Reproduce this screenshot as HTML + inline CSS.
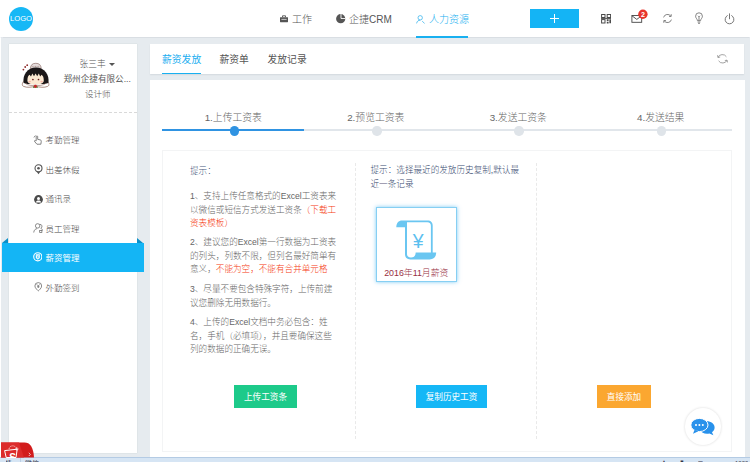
<!DOCTYPE html>
<html lang="zh-CN">
<head>
<meta charset="utf-8">
<title>薪资发放</title>
<style>
*{box-sizing:border-box;margin:0;padding:0}
html,body{width:750px;height:462px;overflow:hidden}
body{position:relative;background:#e6ebef;font-family:"Liberation Sans","Noto Sans CJK SC",sans-serif;color:#666;font-size:8.6px;line-height:1;font-weight:300}
.abs{position:absolute}
.t{position:absolute;white-space:nowrap;line-height:12px;height:12px}
/* header */
#hd{position:absolute;left:0;top:0;width:750px;height:36.8px;background:#fff;box-shadow:0 .6px .8px #d9dee3}
#logo{position:absolute;left:9px;top:7px;width:24px;height:24px;border-radius:50%;background:#16b8f6;color:#fff;font-size:7.6px;line-height:24.4px;text-align:center;letter-spacing:0;font-weight:400}
.nav{position:absolute;top:14.2px;font-size:10px;line-height:12px;height:12px;color:#555;white-space:nowrap}
.nav.on{color:#19b0f0}
#navline{position:absolute;left:416px;top:36.4px;width:52px;height:1.5px;background:#19b0f0}
#plus{position:absolute;left:530px;top:9px;width:49px;height:18.5px;background:#14b4f5}
#plus:before{content:"";position:absolute;left:20px;top:9.2px;width:9.2px;height:.8px;background:#fff}
#plus:after{content:"";position:absolute;left:24.2px;top:5px;width:.8px;height:9.2px;background:#fff}
/* sidebar */
#side{position:absolute;left:8.7px;top:43.6px;width:128.5px;height:409px;background:#fff;box-shadow:0 0 1px rgba(120,135,150,.35)}
#sep{position:absolute;left:8.5px;top:112px;width:128.5px;height:0;border-top:1px dashed #d9d9d9}
.mi{position:absolute;margin-top:.4px;left:45.5px;font-size:8.5px;line-height:12px;height:12px;color:#484848;white-space:nowrap}
#act{position:absolute;left:2px;top:243px;width:141.5px;height:29.4px;background:#14b5f5}
.tri{position:absolute;width:0;height:0;border-style:solid}
/* main */
#tabs{position:absolute;left:150px;top:43.6px;width:594.4px;height:30.4px;background:#fff;box-shadow:0 .8px 1.2px #d3d9df}
.tab{position:absolute;top:53.7px;font-size:9.8px;line-height:12px;height:12px;color:#555;font-weight:400;white-space:nowrap}
#panel{position:absolute;left:150px;top:80px;width:594.5px;height:377px;background:#fff}
#box{position:absolute;left:162px;top:150px;width:570px;height:301.6px;border:1px solid #f3f4f5}
.st{position:absolute;top:111.8px;width:100px;margin-left:-50px;text-align:center;font-size:9.8px;line-height:12px;color:#666;white-space:nowrap}
.dot{position:absolute;width:9.4px;height:9.4px;border-radius:50%;background:#dfe4e9;top:126.2px;margin-left:-4.7px}
.p{position:absolute;left:190px;white-space:nowrap;font-size:8.6px;line-height:13.6px;color:#666}
.red{color:#f5380f}
.vd{position:absolute;top:163px;height:276px;width:0;border-left:1px dashed #e9e9e9}
.btn{position:absolute;top:385px;height:23px;line-height:24.8px;color:#fff;text-align:center;font-size:8.6px;white-space:nowrap;font-weight:400}
#task{position:absolute;left:0;top:456.6px;width:750px;height:6px;background:#d6e5f4;border-top:1px solid #b4cbe4}
</style>
</head>
<body>
<div class="abs" style="left:0;top:37px;width:.8px;height:420px;background:#fff"></div>
<div id="hd">
  <div id="logo">LOGO</div>
  <svg class="abs" style="left:280px;top:14.6px" width="8" height="8" viewBox="0 0 8 8"><rect x="0" y="2.2" width="8" height="5" rx=".4" fill="#555"/><path d="M2.5 2.2V.8h3V2.2" fill="none" stroke="#555" stroke-width=".9"/><rect x="1.4" y="3.9" width="5.2" height=".9" fill="#fff" opacity=".75"/></svg>
  <div class="nav" style="left:292px">工作</div>
  <svg class="abs" style="left:336.3px;top:14.4px" width="9.4" height="9.4" viewBox="0 0 9.4 9.4"><circle cx="4.7" cy="4.7" r="4.6" fill="#555"/><path d="M5 0v4.5H9.4" stroke="#fff" stroke-width=".9" fill="none"/></svg>
  <div class="nav" style="left:349px">企捷CRM</div>
  <svg class="abs" style="left:415.8px;top:14.6px" width="10" height="9" viewBox="0 0 10 9"><circle cx="4.2" cy="2.8" r="2.2" fill="none" stroke="#3eb6ee" stroke-width=".8"/><path d="M0.6 8.4C1 6 2.6 5.2 4.2 5.2" fill="none" stroke="#3eb6ee" stroke-width=".8"/><path d="M6.2 6.2l2.4 2.2" stroke="#3eb6ee" stroke-width=".8"/></svg>
  <div class="nav on" style="left:429px">人力资源</div>
  <div id="navline"></div>
  <div id="plus"></div>
  <!-- qr -->
  <svg class="abs" style="left:601.2px;top:14.2px" width="10.2" height="9.6" viewBox="0 0 10.2 9.6"><g fill="none" stroke="#4a4a4a" stroke-width="1"><rect x=".6" y=".5" width="3.4" height="3"/><rect x="6.2" y=".5" width="3.4" height="3"/><rect x=".6" y="5.600000" width="3.400000" height="3.400000"/></g><path d="M0 4.500000h10.200000" stroke="#4a4a4a" stroke-width=".9"/><path d="M5.800000 5.300000h1.800000v1.600000H5.800000zM8.400000 5.300000h1.600000v4H8.400000zM5.800000 7.800000h1.800000v1.600000H5.800000z" fill="#4a4a4a"/></svg>
  <!-- mail -->
  <svg class="abs" style="left:631px;top:9px" width="17" height="15" viewBox="0 0 17 15"><rect x=".9" y="6.5" width="9.8" height="6.8" fill="#fff" stroke="#444" stroke-width=".9"/><path d="M1 6.8l4.8 3.6 4.8-3.6" fill="none" stroke="#444" stroke-width=".9"/><circle cx="11.9" cy="5.2" r="4.7" fill="#e8352c"/><text x="11.9" y="7.8" font-size="7.2" font-weight="bold" fill="#fff" text-anchor="middle" font-family="Liberation Sans, sans-serif">2</text></svg>
  <!-- refresh -->
  <svg class="abs" style="left:662px;top:13px" width="11" height="11" viewBox="0 0 11 11"><g fill="none" stroke="#666" stroke-width=".8"><path d="M1.6 4.4A4 4 0 0 1 8.8 3.2"/><path d="M9.4 6.6A4 4 0 0 1 2.2 7.8"/><path d="M9.2 1.2v2.2H7M1.8 9.8V7.6H4"/></g></svg>
  <!-- bulb -->
  <svg class="abs" style="left:694px;top:12px" width="10" height="12" viewBox="0 0 10 12"><g fill="none" stroke="#666" stroke-width=".8"><path d="M3.4 8.6C3.4 7 1.6 6.2 1.6 4.2a3.4 3.4 0 0 1 6.8 0C8.4 6.2 6.6 7 6.6 8.6z"/><path d="M3.6 10h2.8M4 11.3h2M5 8.4V4.6M4 3.8l1 1 1-1"/></g></svg>
  <!-- power -->
  <svg class="abs" style="left:723.5px;top:12.5px" width="11" height="12" viewBox="0 0 11 12"><g fill="none" stroke="#666" stroke-width=".9" stroke-linecap="round"><path d="M3.3 2.6A4.4 4.4 0 1 0 7.7 2.6"/><path d="M5.5 .8v5"/></g></svg>
</div>

<!-- sidebar -->
<div id="side"></div>
<svg class="abs" style="left:15px;top:56px" width="40" height="40" viewBox="0 0 40 40">
  <path d="M15.4 12.4C15.6 9 17.400000 7.300000 20.800000 7.300000C24.200000 7.300000 26 9 26.200000 12.400000Z" fill="#e6dddd" stroke="#7d5d55" stroke-width=".6"/>
  <path d="M16.8 10.400000h8" stroke="#9a7f78" stroke-width=".7" stroke-dasharray="1 .6"/>
  <path d="M9.2 24.5C7 27 6.6 29.6 8.6 30.4C12 31.8 16 31.4 20.4 30.2C24.8 31.4 29.4 31.8 32.6 30.4C34.6 29.6 34.2 27 32 24.5Z" fill="#fff" stroke="#8a5d4f" stroke-width=".7"/>
  <path d="M8.6 27C7.4 19 12.5 11.6 21 11.6C29.5 11.6 34.6 19 33.4 27L29.5 28H12.5Z" fill="#1b1718"/>
  <path d="M12.4 24.6C12.4 21 13.4 19.6 14.6 18.8L16 20.6L17.4 17.6L19 20.2L20.6 17.4L22.2 20.2L23.8 17.6L25.2 20.6L26.6 18.8C28 19.8 28.8 21.4 28.8 24.6C28.8 27.2 25.6 28.6 20.6 28.6C15.6 28.6 12.4 27.2 12.4 24.6Z" fill="#fbe9d2"/>
  <circle cx="17.9" cy="23.5" r=".85" fill="#6a1f1f"/><circle cx="23.5" cy="23.5" r=".85" fill="#6a1f1f"/>
  <ellipse cx="14.6" cy="25.6" rx="1.3" ry=".8" fill="#f6b3a6"/><ellipse cx="26.6" cy="25.6" rx="1.3" ry=".8" fill="#f6b3a6"/>
  <path d="M10 27.2C13 29.6 17 29.8 20.4 29.2C23.8 29.8 28 29.6 31.2 27.2" fill="none" stroke="#8a5d4f" stroke-width=".6"/>
  <circle cx="20.4" cy="30.4" r="1.7" fill="#c9282a"/><circle cx="18.7" cy="31.2" r=".8" fill="#4a8a3a"/><circle cx="22.1" cy="31.2" r=".8" fill="#4a8a3a"/>
  <circle cx="8.4" cy="13.6" r=".9" fill="#8e2b2b"/><circle cx="10.2" cy="11" r=".9" fill="#8e2b2b"/><circle cx="12.2" cy="9.2" r=".9" fill="#8e2b2b"/>
</svg>
<div class="t" style="left:79.5px;top:58px;font-size:8.7px;color:#555">张三丰</div>
<div class="tri" style="left:108.8px;top:63.2px;border-width:3.2px 3px 0 3px;border-color:#555 transparent transparent transparent"></div>
<div class="t" style="left:63.5px;top:73px;font-size:8.6px;color:#585858;letter-spacing:0;font-weight:400">郑州企捷有限公...</div>
<div class="t" style="left:85px;top:87.5px;font-size:8.5px;color:#555">设计师</div>
<div id="sep"></div>

<div id="act"></div>
<div class="tri" style="left:2px;top:238px;border-width:0 0 5px 6.5px;border-color:transparent transparent #0b90c9 transparent"></div>
<div class="tri" style="left:137px;top:238px;border-width:5px 0 0 6.5px;border-color:transparent transparent transparent #0b90c9"></div>

<!-- menu icons -->
<svg class="abs" style="left:33.4px;top:135px" width="9.4" height="10.4" viewBox="0 0 10 11"><g fill="none" stroke="#666" stroke-width=".85" stroke-linejoin="round"><path d="M3.4 6.2V1.8a.8.8 0 0 1 1.6 0v2.8l2.800000 .6c.8.2 1.1.7 1 1.5L8.4 9.8H4.2L1.6 6.8c-.4-.6.3-1.200000 .9-.8z"/><path d="M1 2.600000A3 3 0 0 1 2.800000 .7"/></g></svg>
<svg class="abs" style="left:33.6px;top:164.2px" width="9" height="10.6" viewBox="0 0 9 10.6"><path d="M2.6 7.400000L4.500000 10.200000L6.400000 7.400000Z" fill="#555"/><circle cx="4.500000" cy="4.300000" r="3.500000" fill="#fff" stroke="#555" stroke-width="1.1"/><circle cx="4.500000" cy="4.300000" r="1.300000" fill="#555"/></svg>
<svg class="abs" style="left:33.6px;top:194.6px" width="9" height="9" viewBox="0 0 9 9"><circle cx="4.500000" cy="4.500000" r="4.400000" fill="#4a4a4a"/><circle cx="4.500000" cy="3.500000" r="1.500000" fill="#fff"/><path d="M1.900000 7.600000c.2-1.800000 1.300000-2.200000 2.600000-2.200000s2.400000 .4 2.600000 2.200000z" fill="#fff"/></svg>
<svg class="abs" style="left:33px;top:222.6px" width="10.2" height="10.4" viewBox="0 0 11 11"><g fill="none" stroke="#666" stroke-width=".8"><circle cx="5" cy="3" r="2.400000"/><path d="M.8 10.200000C1 7.400000 2.600000 6.200000 4.400000 6"/><path d="M7.200000 1.400000a2.200000 2.200000 0 0 1 1.200000 4.200000c1.400000 .6 1.800000 1.600000 1.900000 2.400000"/><rect x="7.200000" y="8" width="2.400000" height="2.200000"/></g></svg>
<svg class="abs" style="left:32.6px;top:252.3px" width="9.6" height="9.6" viewBox="0 0 9.6 9.6"><circle cx="4.800000" cy="4.800000" r="4.100000" fill="none" stroke="#fff" stroke-width="1.1"/><path d="M2.800000 2.300000h4v3.800000L4.800000 7.700000 2.800000 6.100000z" fill="#fff"/><path d="M3.900000 3.300000l.9 1.100000 .9-1.100000M4.800000 4.400000v2M3.900000 5.200000h1.800000" stroke="#14b5f5" stroke-width=".55" fill="none"/></svg>
<svg class="abs" style="left:33.5px;top:282.4px" width="8.6" height="9.4" viewBox="0 0 10 11"><g fill="none" stroke="#666" stroke-width=".9"><path d="M5 .7a4 4 0 0 1 4 4C9 7.200000 5 10.400000 5 10.400000S1 7.200000 1 4.700000A4 4 0 0 1 5 .7z"/><path d="M3.200000 2.800000l1.800000 1.800000L6.800000 2.800000M5 4.600000v2.400000M3.600000 5.600000h2.800000"/></g></svg>

<div class="mi" style="top:134px">考勤管理</div>
<div class="mi" style="top:163.5px">出差休假</div>
<div class="mi" style="top:193px">通讯录</div>
<div class="mi" style="top:222.5px">员工管理</div>
<div class="mi" style="top:252px;color:#fff;font-weight:400">薪资管理</div>
<div class="mi" style="top:281.5px">外勤签到</div>

<!-- tabs -->
<div id="tabs"></div>
<div class="tab" style="left:162px;color:#1aaef0">薪资发放</div>
<div class="tab" style="left:219.5px">薪资单</div>
<div class="tab" style="left:267.5px">发放记录</div>
<div class="abs" style="left:162px;top:72.5px;width:39px;height:1.5px;background:#19b0f0"></div>
<svg class="abs" style="left:717px;top:53.5px" width="11" height="10" viewBox="0 0 11 10"><g fill="none" stroke="#858585" stroke-width=".75"><path d="M1 3.4A4.6 4.2 0 0 1 9.400000 2.800000"/><path d="M10 6.200000A4.600000 4.200000 0 0 1 1.600000 6.800000"/><path d="M.5 1.200000L1 3.500000L3.200000 3M10.500000 8.400000L10 6.100000L7.800000 6.600000"/></g></svg>

<!-- panel -->
<div id="panel"></div>
<div class="abs" style="left:162px;top:129px;width:570px;height:2px;background:#e1e6eb"></div>
<div class="abs" style="left:162px;top:129px;width:142px;height:2px;background:#2f93e2"></div>
<div class="st" style="left:233.25px">1.上传工资表</div>
<div class="st" style="left:375.75px">2.预览工资表</div>
<div class="st" style="left:518.25px">3.发送工资条</div>
<div class="st" style="left:660.75px">4.发送结果</div>
<div class="dot" style="left:234.5px;background:#2f93e2"></div>
<div class="dot" style="left:376.8px"></div>
<div class="dot" style="left:519px"></div>
<div class="dot" style="left:661.5px"></div>

<div id="box"></div>
<div class="vd" style="left:355px"></div>
<div class="vd" style="left:536px"></div>

<div class="p" style="top:165.1px;color:#46587c">提示：</div>
<div class="p" style="top:190.1px">1、支持上传任意格式的Excel工资表来<br>以微信或短信方式发送工资条<span class="red">（下载工<br>资表模板）</span></div>
<div class="p" style="top:236.2px">2、建议您的Excel第一行数据为工资表<br>的列头，列数不限，但列名最好简单有<br>意义，<span class="red">不能为空，不能有合并单元格</span></div>
<div class="p" style="top:283.3px">3、尽量不要包含特殊字符，上传前建<br>议您删除无用数据行。</div>
<div class="p" style="top:316.2px">4、上传的Excel文档中务必包含：姓<br>名，手机（必填项），并且要确保这些<br>列的数据的正确无误。</div>

<div class="p" style="left:370.5px;top:164.3px;color:#394b70;line-height:13.2px">提示：选择最近的发放历史复制,默认最<br>近一条记录</div>

<!-- card -->
<div class="abs" style="left:376px;top:207px;width:80.5px;height:75px;background:#fff;border:1px solid #86cff3;box-shadow:0 0 4px rgba(70,180,240,.7)"></div>
<svg class="abs" style="left:393.8px;top:217.6px" width="45" height="45" viewBox="0 0 45 45">
  <path d="M2.3 9.3C2.3 5 4.6 2.5 8 2.5H33.5C37 2.5 38.7 4.5 38.7 7.8V34.6H42.2C42.2 38.6 39.6 41.4 35.6 41.4H16.4C13 41.4 11 39.4 11 36V9.3Z" fill="#6ac6f1"/>
  <path d="M13 4.3H33.3C35.8 4.3 36.9 5.5 36.9 7.8V34.6H21.7C21.7 37.6 19.8 39.6 17 39.6C14.4 39.6 13 38.2 13 36Z" fill="#fff"/>
  <text x="24.1" y="29.8" font-size="19.5" fill="#5cc0ef" text-anchor="middle" font-family="Liberation Sans, sans-serif">¥</text>
</svg>
<div class="t" style="left:376px;top:267.1px;width:80.5px;text-align:center;color:#98303f;font-size:8.85px">2016年11月薪资</div>

<div class="btn" style="left:234px;width:63px;background:#1dca8a">上传工资条</div>
<div class="btn" style="left:416px;width:71px;background:#15b7f6">复制历史工资</div>
<div class="btn" style="left:597px;width:54px;background:#fba730">直接添加</div>

<!-- chat -->
<div class="abs" style="left:684.6px;top:408.2px;width:36.6px;height:36.6px;border-radius:50%;background:#fff;box-shadow:0 0 2.5px rgba(0,0,0,.16)"></div>
<svg class="abs" style="left:690.2px;top:416.5px" width="26" height="20" viewBox="0 0 26 20">
  <path d="M14.5 4.500000000000000C20 3.5 24.6 6.4 24.6 10.4C24.6 12.4 23.6 14 22 15.200000000000001L23.4 18.2L19.4 16.400000000000002C15 17.4 11.4 15.6 10.6 13.4Z" fill="#2891eb"/>
  <ellipse cx="9.4" cy="8" rx="8.6" ry="6.6" fill="#2891eb" stroke="#fff" stroke-width="1"/>
  <path d="M4.6 12.8L3 16.8L8.4 14.200000000000001Z" fill="#2891eb"/>
  <circle cx="6" cy="8" r="1" fill="#fff"/><circle cx="9.4" cy="8" r="1" fill="#fff"/><circle cx="12.8" cy="8" r="1" fill="#fff"/>
</svg>

<!-- sogou + taskbar -->
<div id="task"></div>
<svg class="abs" style="left:0;top:441.5px" width="36" height="16" viewBox="0 0 36 16">
  <path d="M1 .5H24.500000C30 .5 33.400000 5 34 15.500000H1Z" fill="#d21c1c"/>
  <path d="M1 .5H19L24 15.500000H1Z" fill="#dc2b2b"/>
  <path d="M4.6 8.6L17.200000 7.200000L16 15.500000H6.200000Z" fill="none" stroke="#fff" stroke-width="1"/>
  <path d="M9 7C9.500000 3.400000 14.500000 2.400000 16.600000 6.400000" fill="none" stroke="#fff" stroke-width=".7" stroke-dasharray="1.2 .8"/>
  <path d="M16.8 5.200000V8.800000M15 7H18.600000" stroke="#fff" stroke-width=".7"/>
  <text x="9.2" y="18.5" font-size="10" font-weight="bold" fill="#fff" font-family="Liberation Sans, sans-serif">S</text>
  <path d="M28.8 10.800000L30.400000 12.400000L28.800000 14" fill="none" stroke="#fff" stroke-width=".7"/>
</svg>
<div class="abs" style="left:20px;top:457.5px;width:1px;height:5px;background:#bccfe4"></div>
<div class="t" style="left:5.5px;top:459.6px;font-size:6px;line-height:6px;height:3px;overflow:hidden;color:#223;font-weight:400">捷</div>
<div class="t" style="left:25px;top:460px;font-size:7px;line-height:7px;height:3px;overflow:hidden;color:#223;font-weight:400">微信</div>
<div class="t" style="left:660px;top:459.2px;font-size:8px;line-height:8px;height:3px;overflow:hidden;color:#334;font-weight:400">▲</div>
<div class="t" style="left:679.5px;top:459px;font-size:7px;line-height:7px;height:3px;overflow:hidden;color:#334;font-weight:400">▮</div>
<div class="t" style="left:698px;top:459.6px;font-size:8px;line-height:8px;height:3px;overflow:hidden;color:#334;font-weight:400">◘</div>
<div class="t" style="left:722px;top:459.8px;font-size:8px;line-height:8px;height:3px;overflow:hidden;color:#334;font-weight:400">◔</div>
<div class="t" style="left:735px;top:460.2px;font-size:6px;line-height:6px;height:2px;overflow:hidden;color:#334;font-weight:400">1000</div>
</body>
</html>
